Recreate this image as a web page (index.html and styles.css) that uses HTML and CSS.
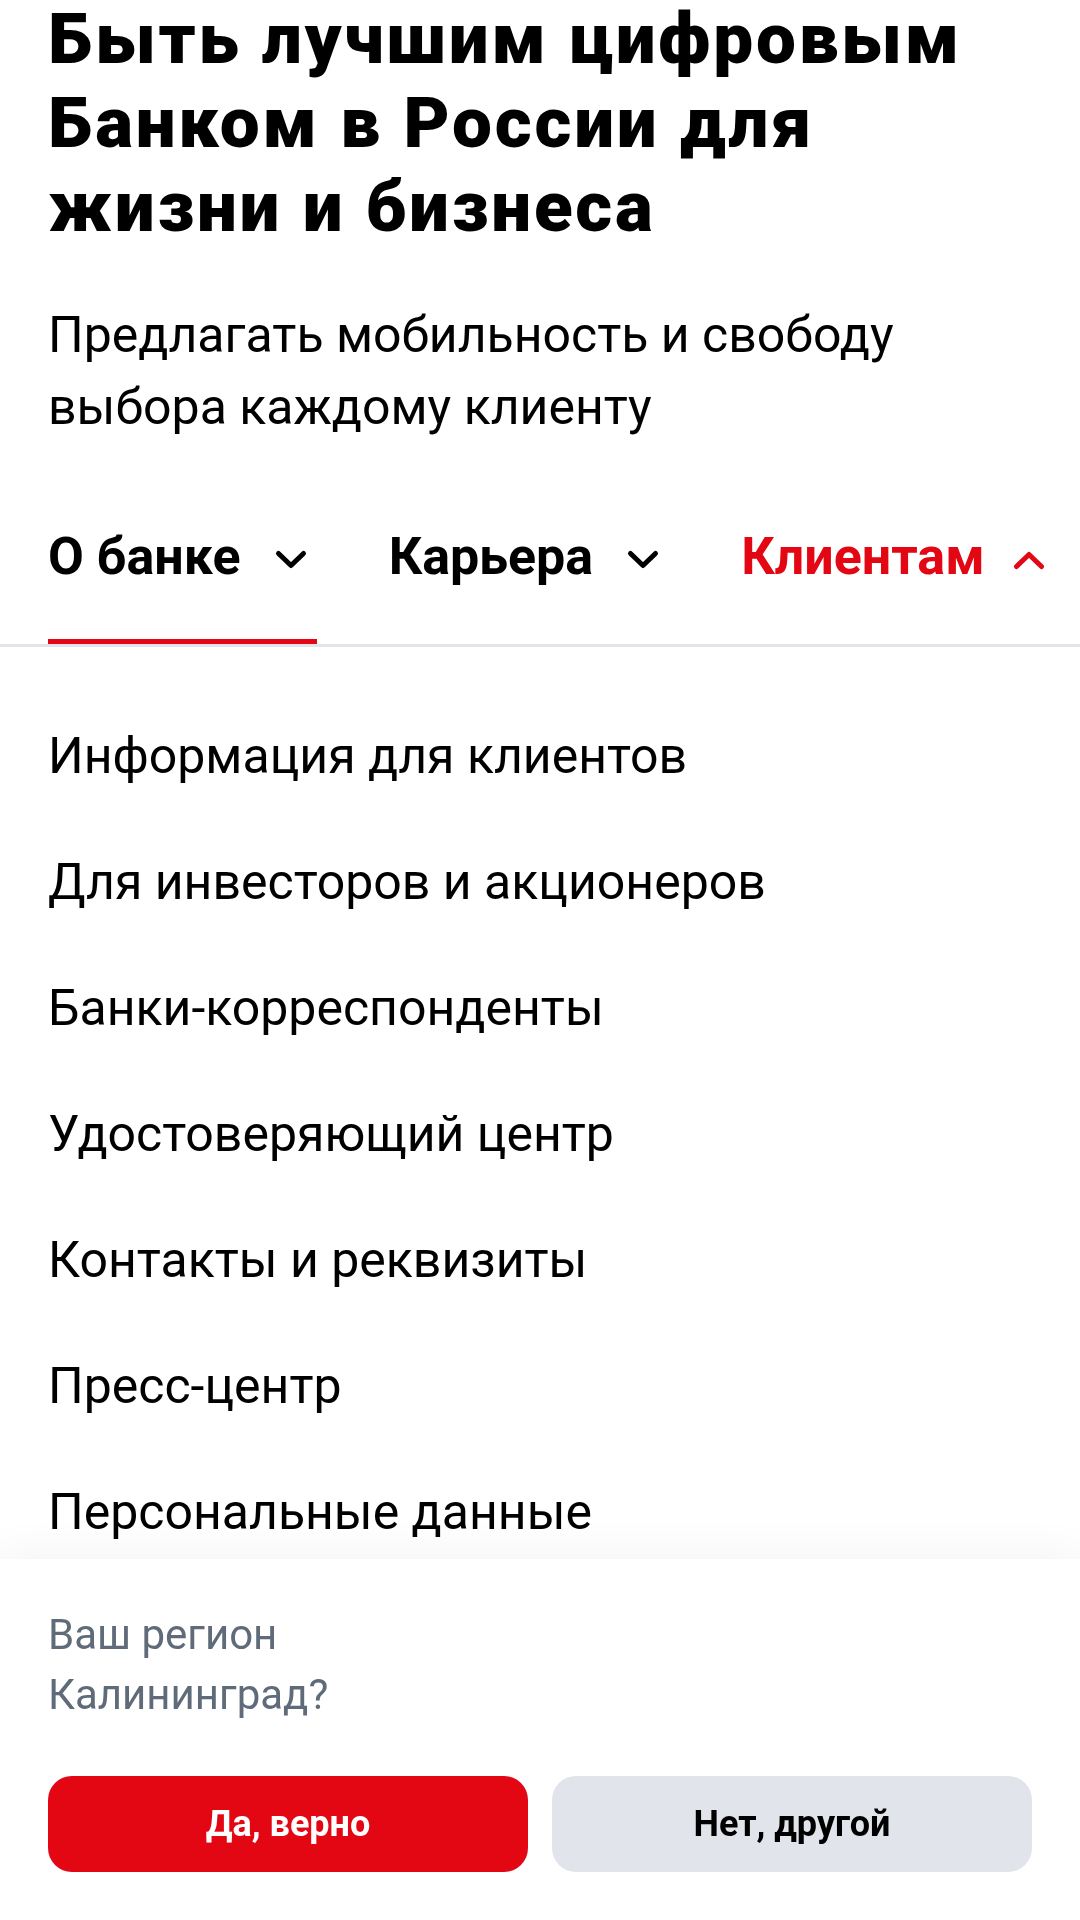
FILE: index.html
```html
<!DOCTYPE html>
<html lang="ru">
<head>
<meta charset="utf-8">
<title>О банке</title>
<link rel="stylesheet" href="styles.css">
</head>
<body>
<main class="page">
  <h1 class="title">Быть лучшим цифровым Банком в России для жизни и бизнеса</h1>
  <p class="lead">Предлагать мобильность и свободу выбора каждому клиенту</p>

  <nav class="tabs">
    <div class="tab tab-active">
      <span class="tab-label">О банке</span>
      <svg class="chev" viewBox="0 0 40 40" aria-hidden="true"><path d="M7.5 13.5 L20 25.5 L32.5 13.5"/></svg>
    </div>
    <div class="tab">
      <span class="tab-label">Карьера</span>
      <svg class="chev" viewBox="0 0 40 40" aria-hidden="true"><path d="M7.5 13.5 L20 25.5 L32.5 13.5"/></svg>
    </div>
    <div class="tab tab-open">
      <span class="tab-label">Клиентам</span>
      <svg class="chev" viewBox="0 0 40 40" aria-hidden="true"><path d="M7.5 26.5 L20 14.5 L32.5 26.5"/></svg>
    </div>
  </nav>

  <ul class="menu">
    <li class="menu-item">Информация для клиентов</li>
    <li class="menu-item">Для инвесторов и акционеров</li>
    <li class="menu-item">Банки-корреспонденты</li>
    <li class="menu-item">Удостоверяющий центр</li>
    <li class="menu-item">Контакты и реквизиты</li>
    <li class="menu-item">Пресс-центр</li>
    <li class="menu-item">Персональные данные</li>
  </ul>
</main>

<section class="region">
  <div class="region-text">
    <span class="region-line">Ваш регион</span>
    <span class="region-line">Калининград?</span>
  </div>
  <div class="region-actions">
    <button class="btn btn-primary">Да, верно</button>
    <button class="btn btn-secondary">Нет, другой</button>
  </div>
</section>
</body>
</html>
```

FILE: styles.css
```css
html, body {
  margin: 0;
  padding: 0;
  background: #ffffff;
}

body {
  font-family: Roboto, "Noto Sans", "Liberation Sans", sans-serif;
  color: #000000;
  overflow: hidden;
  height: 1920px;
}

.page {
  padding: 0 0 0 48px;
}

.title {
  margin: -3px 48px 0 0;
  font-size: 71px;
  line-height: 84px;
  font-weight: 900;
  letter-spacing: 2.8px;
}

.lead {
  margin: 50px 48px 0 0;
  font-size: 50px;
  line-height: 72px;
  font-weight: 400;
}

.tabs {
  margin: 84px 0 0 -48px;
  padding-left: 48px;
  display: flex;
  gap: 72px;
  white-space: nowrap;
  overflow: hidden;
  border-bottom: 3px solid #e1e4eb;
}

.tab {
  display: flex;
  align-items: center;
  gap: 30px;
  padding: 0 6px 52px 0;
  border-bottom: 5px solid transparent;
  flex: none;
}

.tab-active {
  border-bottom-color: #e30613;
}

.tab-label {
  font-size: 52px;
  line-height: 60px;
  font-weight: 700;
}

.chev {
  width: 40px;
  height: 40px;
  flex: none;
  margin-top: 6px;
}

.chev path {
  fill: none;
  stroke: #000000;
  stroke-width: 5;
  stroke-linecap: round;
  stroke-linejoin: round;
}

.tab-open .tab-label {
  color: #e30613;
}

.tab-open .chev {
  margin-left: -6px;
}

.tab-open .chev path {
  stroke: #e30613;
}

.menu {
  list-style: none;
  margin: 0;
  padding: 46px 0 0 0;
}

.menu-item {
  font-size: 50px;
  line-height: 56px;
  padding: 35px 0;
  font-weight: 400;
}

.region {
  position: fixed;
  left: 0;
  right: 0;
  bottom: 0;
  height: 361px;
  box-sizing: border-box;
  background: #ffffff;
  padding: 46px 48px 48px;
  box-shadow: 0 -6px 40px rgba(0, 0, 0, 0.05);
  display: flex;
  flex-direction: column;
  justify-content: space-between;
}

.region-text {
  display: flex;
  flex-direction: column;
  font-size: 42px;
  line-height: 60px;
  color: #5f6b79;
}

.region-line {
  display: block;
}

.region-actions {
  display: flex;
  gap: 24px;
}

.btn {
  flex: 1;
  height: 96px;
  border: none;
  border-radius: 24px;
  font-family: Roboto, "Noto Sans", "Liberation Sans", sans-serif;
  font-size: 36px;
  font-weight: 700;
}

.btn-primary {
  background: #e30613;
  color: #ffffff;
}

.btn-secondary {
  background: #e1e4eb;
  color: #000000;
}
```
